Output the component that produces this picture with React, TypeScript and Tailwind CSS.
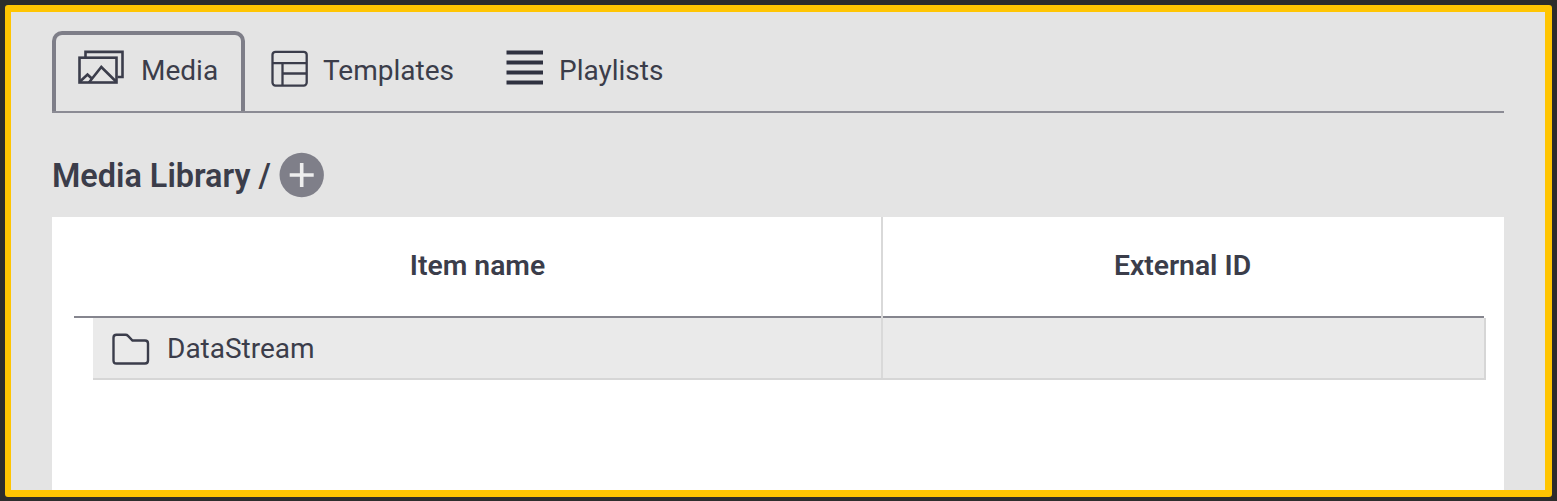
import React from "react";

const ink = "#3b3d4b";

function MediaIcon() {
  return (
    <svg width="48" height="36" viewBox="0 0 48 36" fill="none" stroke={ink} strokeWidth="2.6" className="shrink-0">
      <path d="M8.500 7.5V1.9H45.500V27H40.500" />
      <rect x="2.5" y="7.7" width="37" height="24.800" />
      <path d="M3 31.5L10.5 24.5L14.5 28.3M12 32.5L24.3 17L39 31.5" />
    </svg>
  );
}

function TemplateIcon() {
  return (
    <svg width="38" height="38" viewBox="0 0 38 38" fill="none" stroke={ink} strokeWidth="2.3" className="shrink-0">
      <rect x="1.5" y="1.8" width="34.2" height="33.8" rx="3" />
      <path d="M1.5 13.2H35.700M11.5 13.2V35.500M11.5 23.5H35.700" />
    </svg>
  );
}

function ListIcon() {
  return (
    <svg width="37" height="36" viewBox="0 0 37 36" fill="#2f3140" className="shrink-0">
      <path d="M.5 .5H37V4.500H.5ZM.5 10.500H37V14.500H.5ZM.5 20.500H37V24.500H.5ZM.5 30.500H37V34.500H.5Z" />
    </svg>
  );
}

function FolderIcon() {
  return (
    <svg width="38" height="32" viewBox="0 0 38 32" fill="none" stroke={ink} strokeWidth="2.4" className="shrink-0">
      <path d="M4.500 1.800H13.500Q15 1.800 16 2.800L20.500 7.500H33Q36 7.500 36 10.500V27.500Q36 30.500 33 30.500H4.500Q1.500 30.500 1.500 27.500V4.800Q1.500 1.800 4.500 1.800Z" />
    </svg>
  );
}

export default function App() {
  return (
    <div className="h-[501px] w-[1557px] overflow-hidden bg-[#2d2d2c] pt-[5px] pl-[5px] font-['Roboto',sans-serif] text-[#3b3d4a]">
      <div className="h-[492px] w-[1547px] overflow-hidden rounded-[3px] border-7 border-l-6 border-[#ffc502] bg-[#e4e4e4] pt-[18px] pr-[41px] pl-[41px]">
        <nav className="flex h-[83px] border-b-2 border-[#8b8b94] text-[28px] leading-[34px]">
          <div className="mt-px flex h-[80px] w-[193px] shrink-0 items-start rounded-t-[10px] border-4 border-b-0 border-[#7e7e88] pt-[15px] pl-[21px]">
            <MediaIcon />
            <span className="ml-[16px] pt-[4px]">Media</span>
          </div>
          <div className="ml-[26px] flex items-start pt-[20px]">
            <TemplateIcon />
            <span className="ml-[14px] pt-[4px]">Templates</span>
          </div>
          <div className="ml-[52px] flex items-start pt-[20px]">
            <ListIcon />
            <span className="ml-[16px] pt-[4px]">Playlists</span>
          </div>
        </nav>
        <div className="flex h-[104px] items-center pt-[19px]">
          <h1 className="pt-[2px] text-[32.4px] leading-[40px] font-semibold">Media Library /</h1>
          <svg width="46" height="46" viewBox="0 0 46 46" className="ml-[8px] shrink-0">
            <circle cx="22.7" cy="23" r="22.2" fill="#7f7f89" />
            <path d="M22.700 11V35M10.700 23H34.700" stroke="#eeeeee" strokeWidth="3.600" />
          </svg>
        </div>
        <main className="h-[300px] bg-white pr-[18px] pl-[22px]">
          <div className="flex h-[101px] text-[28.3px] font-semibold">
            <div className="flex w-[807px] items-center justify-center border-b-2 border-[#85858e] pb-[1px] leading-[34px]">Item name</div>
            <div className="w-[2px] bg-[#d9d9d9]" />
            <div className="mr-[2px] flex flex-1 items-center justify-center border-b-2 border-[#85858e] pr-[2px] pb-[1px] leading-[34px]">External ID</div>
          </div>
          <div className="ml-[19px] flex h-[62px] border-r-2 border-b-2 border-[#d6d6d6] bg-[#eaeaea] text-[28px]">
            <div className="flex w-[788px] items-center pt-[2px] pl-[19px]">
              <FolderIcon />
              <span className="ml-[17px] leading-[34px]">DataStream</span>
            </div>
            <div className="w-[2px] bg-[#d9d9d9]" />
          </div>
        </main>
      </div>
    </div>
  );
}
